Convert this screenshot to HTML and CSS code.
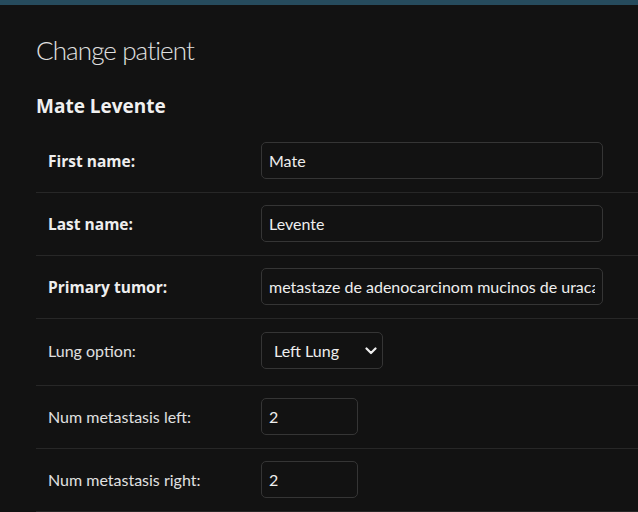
FILE: index.html
```html
<!DOCTYPE html>
<html lang="en">
<head>
<meta charset="utf-8">
<title>Change patient</title>
<link rel="stylesheet" href="styles.css">
</head>
<body>
<div class="topbar"></div>
<main class="content">
  <h1 class="title">Change patient</h1>
  <h2 class="subtitle">Mate Levente</h2>
  <form class="form">
    <div class="row">
      <label class="label required" for="f1">First name:</label>
      <input id="f1" class="field field-text" type="text" value="Mate">
    </div>
    <div class="row">
      <label class="label required" for="f2">Last name:</label>
      <input id="f2" class="field field-text" type="text" value="Levente">
    </div>
    <div class="row">
      <label class="label required" for="f3">Primary tumor:</label>
      <input id="f3" class="field field-text" type="text" value="metastaze de adenocarcinom mucinos de uraca">
    </div>
    <div class="row row-select">
      <label class="label" for="f4">Lung option:</label>
      <div class="select-wrap">
        <select id="f4" class="field field-select">
          <option>Left Lung</option>
          <option>Right Lung</option>
          <option>Both</option>
        </select>
        <svg class="chevron" width="12" height="8" viewBox="0 0 12 8" aria-hidden="true">
          <path d="M1.5 1.5 L6 6 L10.5 1.5" fill="none" stroke="#eeeeee" stroke-width="2.2" stroke-linecap="round" stroke-linejoin="round"/>
        </svg>
      </div>
    </div>
    <div class="row">
      <label class="label" for="f5">Num metastasis left:</label>
      <input id="f5" class="field field-num" type="text" value="2">
    </div>
    <div class="row">
      <label class="label" for="f6">Num metastasis right:</label>
      <input id="f6" class="field field-num" type="text" value="2">
    </div>
  </form>
</main>
</body>
</html>
```

FILE: styles.css
```css
* { box-sizing: border-box; }

html, body {
  margin: 0;
  padding: 0;
  background: #121212;
  color: #eeeeee;
  font-family: "Segoe UI", Lato, "Open Sans", sans-serif;
  overflow: hidden;
}

.topbar {
  height: 5px;
  background: #264b5d;
}

.content {
  padding: 0 0 0 36px;
}

.title {
  margin: 28px 0 0;
  font-family: Lato, sans-serif;
  font-size: 26px;
  line-height: 34px;
  font-weight: 300;
  letter-spacing: -0.9px;
  color: #e0e0e0;
}

.subtitle {
  margin: 27px 0 0;
  font-family: "Open Sans", sans-serif;
  font-size: 19px;
  line-height: 24px;
  font-weight: 700;
  color: #f0f0f0;
}

.form {
  margin-top: 12px;
}

.row {
  display: flex;
  align-items: center;
  padding: 12px 0 13px 12px;
  border-bottom: 1px solid #272727;
}

.row-select {
  padding-top: 13px;
  padding-bottom: 16px;
}

.label {
  width: 213px;
  flex: none;
  font-size: 16px;
  line-height: 20px;
  font-weight: 400;
  color: #e0e0e0;
}

.label.required {
  font-family: "Open Sans", sans-serif;
  font-size: 15.5px;
  font-weight: 700;
  color: #eeeeee;
}

.field {
  height: 37px;
  margin: 0;
  border: 1px solid #353535;
  border-radius: 5px;
  background: #121212;
  color: #eeeeee;
  font-family: inherit;
  font-size: 16px;
  font-weight: 400;
  padding: 0 7px;
  outline: none;
}

.field-text { width: 342px; }
.field-num { width: 97px; }

.select-wrap {
  position: relative;
  width: 122px;
  height: 37px;
}

.field-select {
  width: 122px;
  appearance: none;
  -webkit-appearance: none;
  padding: 0 12px;
}

.chevron {
  position: absolute;
  left: 104px;
  top: 15px;
  pointer-events: none;
}
```
